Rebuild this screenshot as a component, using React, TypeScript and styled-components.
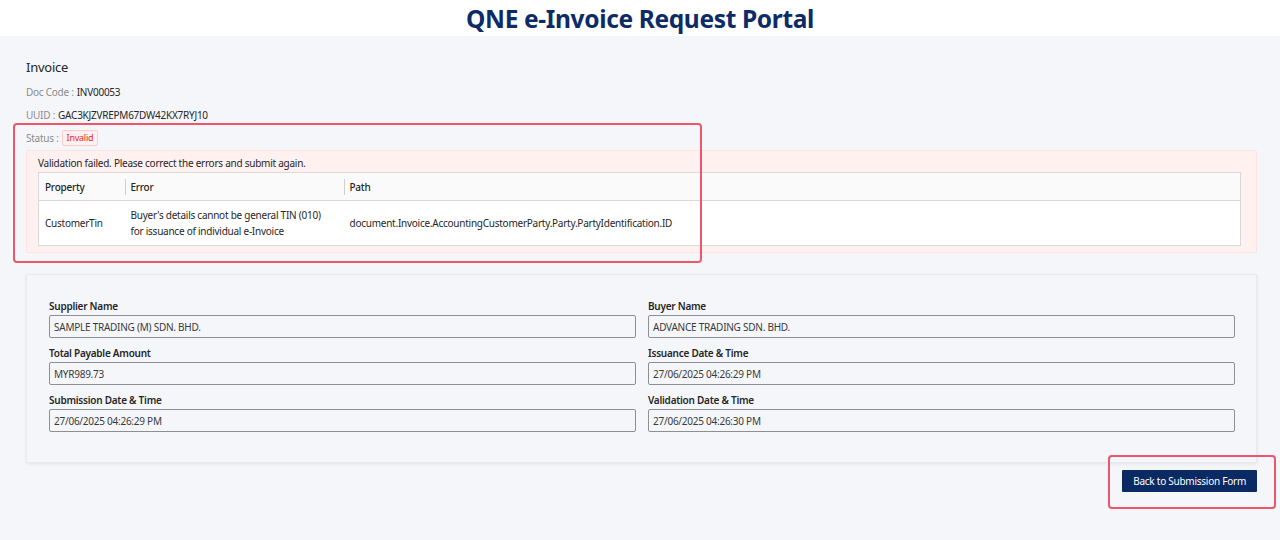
import React from 'react'
import styled, { createGlobalStyle } from 'styled-components'

const GlobalStyle = createGlobalStyle`
  html, body {
    margin: 0;
    padding: 0;
    background: #f4f6fa;
    font-family: "Noto Sans", "Open Sans", sans-serif;
    color: #1f1f1f;
    letter-spacing: -0.25px;
  }
`

const Header = styled.header`
  height: 36px;
  background: #ffffff;
  display: flex;
  align-items: center;
  justify-content: center;
`

const Title = styled.h1`
  margin: 0;
  font-size: 24.5px;
  font-weight: 700;
  color: #0d2b66;
  letter-spacing: -0.35px;
`

const Main = styled.main`
  position: relative;
  padding: 22px 23px 40px 26px;
  min-height: 460px;
  box-sizing: border-box;
`

const SectionTitle = styled.div`
  font-size: 13px;
  line-height: 18px;
  color: #262626;
  margin-bottom: 4px;
`

const InfoLine = styled.div`
  font-size: 10px;
  color: #8c8c8c;
  height: 23px;
  display: flex;
  align-items: center;
  gap: 3px;
`

const InfoValue = styled.span`
  color: #262626;
`

const Badge = styled.span`
  font-size: 9px;
  color: #f5222d;
  background: #fff1f0;
  border: 1px solid #ffccc7;
  border-radius: 2px;
  padding: 0 4px;
  line-height: 14px;
`

const Alert = styled.div`
  margin-top: 1px;
  background: #fff1f0;
  border: 1px solid #ffe3e0;
  border-radius: 2px;
  padding: 5px 15px 6px 11px;
`

const AlertText = styled.div`
  font-size: 10px;
  line-height: 14px;
  color: #262626;
  margin-bottom: 2px;
`

const Table = styled.table`
  width: 100%;
  table-layout: fixed;
  border-collapse: collapse;
  background: #ffffff;
  border: 1px solid #d9d9d9;
  font-size: 10px;
  color: #262626;
`

const Th = styled.th<{ $divider?: boolean }>`
  position: relative;
  text-align: left;
  font-weight: 500;
  background: #fafafa;
  height: 28px;
  padding: 0 6px;
  border-bottom: 1px solid #d9d9d9;
  box-sizing: border-box;

  ${({ $divider }) =>
    $divider &&
    `
    &::before {
      content: '';
      position: absolute;
      left: 0;
      top: 6px;
      height: 16px;
      width: 1px;
      background: #cfcfcf;
    }
  `}
`

const Td = styled.td`
  height: 44px;
  padding: 0 6px;
  line-height: 16px;
  vertical-align: middle;
`

const Card = styled.section`
  margin-top: 21px;
  background: #f5f6fa;
  border: 1px solid #e8e9ed;
  box-shadow: 0 1px 3px rgba(0, 0, 0, 0.08);
  padding: 24px 21px 30px 22px;
  display: grid;
  grid-template-columns: 1fr 1fr;
  column-gap: 12px;
  row-gap: 8px;
`

const Field = styled.div`
  display: flex;
  flex-direction: column;
  gap: 2px;
`

const Label = styled.label`
  font-size: 10px;
  line-height: 14px;
  font-weight: 600;
  color: #262626;
`

const Input = styled.input`
  height: 23px;
  box-sizing: border-box;
  border: 1px solid #8f8f8f;
  border-radius: 2px;
  background: #f5f6fa;
  font-family: inherit;
  letter-spacing: inherit;
  font-size: 10px;
  color: #3a3a3a;
  padding: 0 4px;
  outline: none;
`

const Actions = styled.div`
  display: flex;
  justify-content: flex-end;
  margin-top: 7px;
`

const Button = styled.button`
  background: #0b2a63;
  color: #ffffff;
  border: none;
  border-radius: 1px;
  font-family: inherit;
  letter-spacing: inherit;
  font-size: 10px;
  height: 22px;
  padding: 0 11px;
  cursor: pointer;
`

const Highlight = styled.div<{ $x: number; $y: number; $w: number; $h: number }>`
  position: absolute;
  left: ${({ $x }) => $x}px;
  top: ${({ $y }) => $y}px;
  width: ${({ $w }) => $w}px;
  height: ${({ $h }) => $h}px;
  border: 2.5px solid #f0566a;
  border-radius: 4px;
  box-sizing: border-box;
  pointer-events: none;
`

const fields = [
  { label: 'Supplier Name', value: 'SAMPLE TRADING (M) SDN. BHD.' },
  { label: 'Buyer Name', value: 'ADVANCE TRADING SDN. BHD.' },
  { label: 'Total Payable Amount', value: 'MYR989.73' },
  { label: 'Issuance Date & Time', value: '27/06/2025 04:26:29 PM' },
  { label: 'Submission Date & Time', value: '27/06/2025 04:26:29 PM' },
  { label: 'Validation Date & Time', value: '27/06/2025 04:26:30 PM' },
]

export default function App() {
  return (
    <>
      <GlobalStyle />
      <Header>
        <Title>QNE e-Invoice Request Portal</Title>
      </Header>
      <Main>
        <SectionTitle>Invoice</SectionTitle>
        <InfoLine>
          Doc Code : <InfoValue>INV00053</InfoValue>
        </InfoLine>
        <InfoLine>
          UUID : <InfoValue>GAC3KJZVREPM67DW42KX7RYJ10</InfoValue>
        </InfoLine>
        <InfoLine>
          Status : <Badge>Invalid</Badge>
        </InfoLine>
        <Alert>
          <AlertText>Validation failed. Please correct the errors and submit again.</AlertText>
          <Table>
            <colgroup>
              <col style={{ width: 86 }} />
              <col style={{ width: 219 }} />
              <col />
            </colgroup>
            <thead>
              <tr>
                <Th>Property</Th>
                <Th $divider>Error</Th>
                <Th $divider>Path</Th>
              </tr>
            </thead>
            <tbody>
              <tr>
                <Td>CustomerTin</Td>
                <Td>
                  Buyer's details cannot be general TIN (010)
                  <br />
                  for issuance of individual e-Invoice
                </Td>
                <Td>document.Invoice.AccountingCustomerParty.Party.PartyIdentification.ID</Td>
              </tr>
            </tbody>
          </Table>
        </Alert>
        <Card>
          {fields.map((f) => (
            <Field key={f.label}>
              <Label>{f.label}</Label>
              <Input readOnly value={f.value} />
            </Field>
          ))}
        </Card>
        <Actions>
          <Button>Back to Submission Form</Button>
        </Actions>
        <Highlight $x={13} $y={87} $w={689} $h={140} />
        <Highlight $x={1108} $y={419} $w={168} $h={54} />
      </Main>
    </>
  )
}
